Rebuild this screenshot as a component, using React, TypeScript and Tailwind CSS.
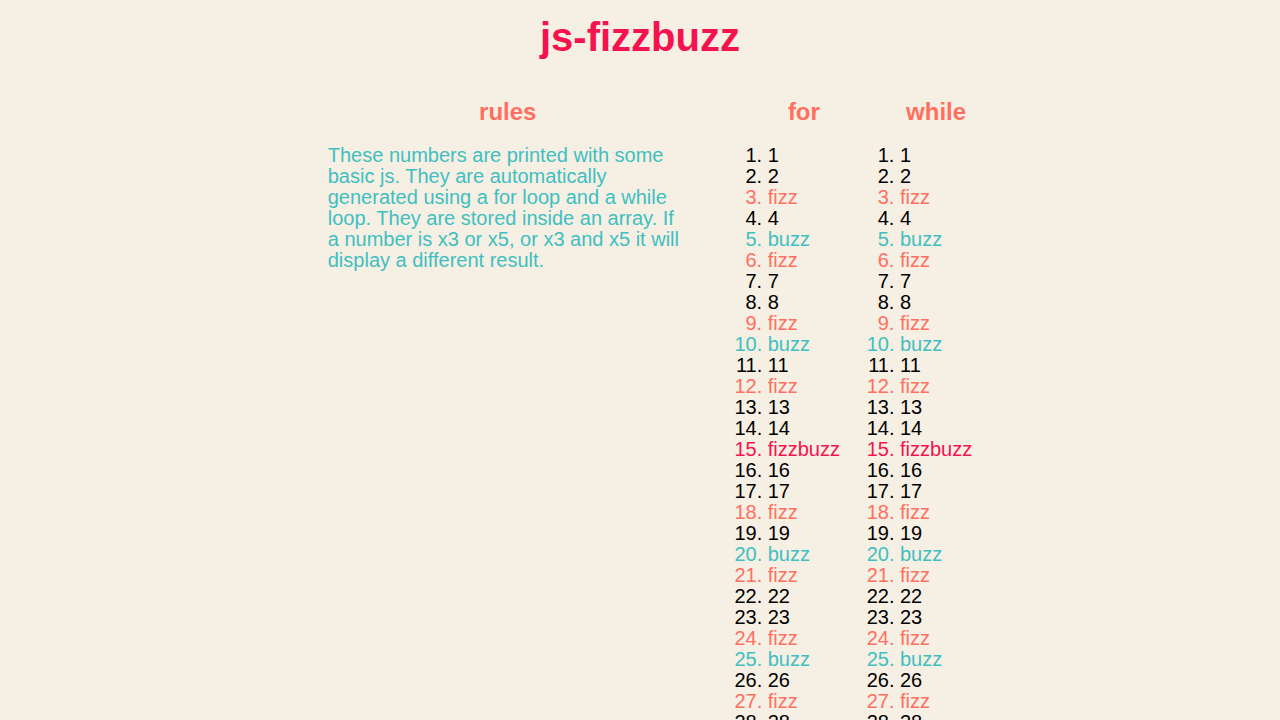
type Entry = { label: string; color: string };

function entryFor(n: number): Entry {
  if (n % 15 === 0) return { label: "fizzbuzz", color: "text-[#f5134f]" };
  if (n % 3 === 0) return { label: "fizz", color: "text-[#ff6f61]" };
  if (n % 5 === 0) return { label: "buzz", color: "text-[#40bfc1]" };
  return { label: String(n), color: "text-black" };
}

function withFor(limit: number): Entry[] {
  const entries: Entry[] = [];
  for (let n = 1; n <= limit; n++) entries.push(entryFor(n));
  return entries;
}

function withWhile(limit: number): Entry[] {
  const entries: Entry[] = [];
  let n = 1;
  while (n <= limit) {
    entries.push(entryFor(n));
    n++;
  }
  return entries;
}

function Heading({ children }: { children: string }) {
  return <h2 className="mb-[19px] text-center text-2xl leading-7 font-bold text-[#ff6f61]">{children}</h2>;
}

function ResultList({ title, entries }: { title: string; entries: Entry[] }) {
  return (
    <section>
      <Heading>{title}</Heading>
      <ol className="list-decimal">
        {entries.map((entry, i) => (
          <li key={i} className={entry.color}>
            {entry.label}
          </li>
        ))}
      </ol>
    </section>
  );
}

export default function App() {
  return (
    <div className="min-h-screen bg-[#f6efe3] pb-5 font-['Liberation_Sans',Arial,sans-serif] text-[20px] leading-[21px]">
      <h1 className="pt-[15px] text-center text-[40px] leading-[44px] font-bold text-[#f5134f]">js-fizzbuzz</h1>
      <main className="mt-[39px] flex justify-center gap-20 pl-5">
        <section className="w-[360px]">
          <Heading>rules</Heading>
          <p className="text-[#40bfc1]">
            These numbers are printed with some basic js. They are automatically generated using a for loop and a
            while loop. They are stored inside an array. If a number is x3 or x5, or x3 and x5 it will display a
            different result.
          </p>
        </section>
        <div className="flex gap-15">
          <ResultList title="for" entries={withFor(100)} />
          <ResultList title="while" entries={withWhile(100)} />
        </div>
      </main>
    </div>
  );
}
